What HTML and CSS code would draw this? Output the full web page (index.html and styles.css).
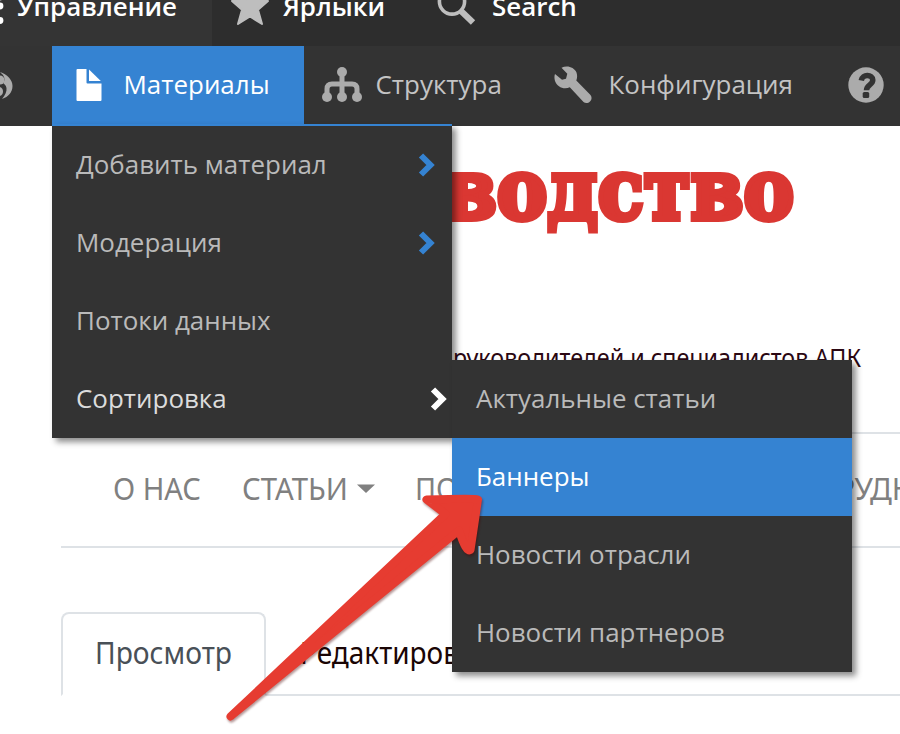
FILE: index.html
```html
<!DOCTYPE html>
<html lang="ru">
<head>
<meta charset="utf-8">
<title>Материалы</title>
<link rel="stylesheet" href="styles.css">
</head>
<body>
<header class="toolbar">
  <div class="bar">
    <a class="tab tab-manage"><svg class="i-burger" width="6" height="44" viewBox="0 0 6 44"><g fill="#fff"><circle cx="0" cy="12" r="3.4"/><circle cx="0" cy="21" r="3.4"/><circle cx="0" cy="35.500" r="3.400"/></g></svg><span>Управление</span></a>
    <a class="tab tab-short"><svg width="40" height="40" viewBox="0 0 40 40"><path fill="#bebebe" stroke="#bebebe" stroke-width="2" stroke-linejoin="round" d="M20 2l5.300 12h12.700l-10 8.800 4 14.200-12-7.500-12 7.500 4-14.200-10-8.800h12.700z"/></svg><span>Ярлыки</span></a>
    <a class="tab tab-search"><svg width="40" height="40" viewBox="0 0 40 40"><circle cx="16" cy="14.500" r="12.600" fill="none" stroke="#bebebe" stroke-width="3.600"/><path d="M25 24l12 11.500" stroke="#bebebe" stroke-width="6.200"/></svg><span>Search</span></a>
  </div>
  <nav class="tray">
    <a class="item drop"><svg width="14" height="38" viewBox="0 0 14 38"><g fill="#ababab"><path d="M0 5c7 2 12.500 8 12.500 14 0 6-4 11-10.500 13 3-4 5-7 4.500-11C6 18 4 17 3 16c2-2 2-5 0-8z"/><circle cx="0" cy="13" r="4.500"/><path d="M0 20c4 1 4 8 0 9z"/></g></svg></a>
    <a class="item content"><svg width="26" height="34" viewBox="0 0 26 34"><path fill="#fff" d="M1.500 0h9v13.500q0 1 1 1h14v16.500q0 1-1 1h-23q-1 0-1-1V1q0-1 1-1z"/><path fill="#fff" d="M13 .5L24.800 12H13z"/></svg><span>Материалы</span></a>
    <a class="item structure"><svg width="40" height="36" viewBox="0 0 40 36"><g fill="#ababab"><circle cx="20" cy="5" r="5"/><circle cx="5" cy="30" r="5"/><circle cx="20" cy="30" r="5"/><circle cx="35" cy="30" r="5"/></g><path d="M20 5v25M5 29v-7q0-5 5-5h20q5 0 5 5v7" fill="none" stroke="#ababab" stroke-width="5"/></svg><span>Структура</span></a>
    <a class="item config"><svg width="38" height="38" viewBox="0 0 38 38"><path fill="#ababab" d="M7.500 1.800C13-1 20 1 22.500 6.500c1 3 .7 6-.2 8L36.500 29c3.500 4.500-2.500 10.500-7 7L15.800 21.300C10 24 3 21 1 15c-.8-3-.7-5 0-7l7 5.700 4-1 1.300-5z"/></svg><span>Конфигурация</span></a>
    <a class="item help"><svg width="36" height="36" viewBox="0 0 36 36"><circle cx="18" cy="18" r="17.700" fill="#ababab"/><path d="M13.300 13.500c1-7 11.500-6 11.500-.5 0 5-6.300 4.800-6.300 10.300" fill="none" stroke="#333" stroke-width="5.500"/><rect x="14.700" y="25" width="6.500" height="6" rx="1.600" fill="#333"/></svg></a>
  </nav>
</header>

<main class="page">
  <section class="brand">
    <svg class="logo" width="360" height="80"><text x="0" y="57.500" textLength="350" lengthAdjust="spacingAndGlyphs">водство</text></svg>
    <svg class="tagline" width="420" height="36"><text x="0" y="27" textLength="408" lengthAdjust="spacingAndGlyphs">руководителей и специалистов АПК</text></svg>
  </section>
  <nav class="site-nav">
    <svg class="n1" width="90" height="40"><text x="0" y="30" textLength="88" lengthAdjust="spacingAndGlyphs">О НАС</text></svg>
    <svg class="n2" width="134" height="40"><text x="0" y="30" textLength="106" lengthAdjust="spacingAndGlyphs">СТАТЬИ</text><path d="M115 14.500h18l-9 8.500z" fill="#808080"/></svg>
    <svg class="n3" width="44" height="40"><text x="1" y="30" textLength="43" lengthAdjust="spacingAndGlyphs">ПО</text></svg>
    <svg class="n4" width="80" height="40"><text x="2" y="30" textLength="77" lengthAdjust="spacingAndGlyphs">РУДН</text></svg>
  </nav>
  <div class="tabs">
    <a class="view"><svg width="140" height="40"><text x="1" y="30" textLength="137" lengthAdjust="spacingAndGlyphs">Просмотр</text></svg></a>
    <a class="edit"><svg width="165" height="40"><text x="1" y="30" textLength="159" lengthAdjust="spacingAndGlyphs">Редактиров</text></svg></a>
  </div>
</main>

<ul class="menu menu-main">
  <li><span>Добавить материал</span><svg class="chev" width="18" height="26" viewBox="0 0 18 26"><path d="M3 3.500l9.500 9.500-9.500 9.500"/></svg></li>
  <li><span>Модерация</span><svg class="chev" width="18" height="26" viewBox="0 0 18 26"><path d="M3 3.500l9.500 9.500-9.500 9.500"/></svg></li>
  <li><span>Потоки данных</span></li>
  <li class="open"><span>Сортировка</span><svg class="chev" width="18" height="26" viewBox="0 0 18 26"><path d="M3 3.500l9.500 9.500-9.500 9.500"/></svg></li>
</ul>
<ul class="menu menu-sub">
  <li><span>Актуальные статьи</span></li>
  <li class="active"><span>Баннеры</span></li>
  <li><span>Новости отрасли</span></li>
  <li><span>Новости партнеров</span></li>
</ul>

<svg class="arrow" width="280" height="250" viewBox="220 480 280 250"><path fill="#e63c31" stroke="#e63c31" stroke-width="8" stroke-linejoin="round" d="M230.500 716.500L445.500 514 426.500 499.500Q477 498 478 499.500L470.500 550Q466 553 459 530.500Z"/></svg>
</body>
</html>
```
FILE: styles.css
```css
* { box-sizing: border-box; }
body {
  margin: 0;
  width: 900px;
  height: 734px;
  overflow: hidden;
  position: relative;
  background: #fff;
  font-family: "Open Sans", "Noto Sans", sans-serif;
  font-size: 25.950px;
}
svg { display: block; flex: none; }
.bar {
  display: flex;
  height: 78px;
  margin-top: -32px;
  background: #2d2d2d;
  color: #fff;
  font-weight: 600;
}
.toolbar { display: flow-root; overflow: hidden; }
.tab { display: flex; align-items: center; white-space: nowrap; }
.tab span, .menu span { padding-bottom: 2px; }
.tab-manage { width: 212px; background: #343434; gap: 11px; }
.tab-short { width: 206px; padding-left: 18px; gap: 13px; }
.tab-search { padding-left: 18px; gap: 16px; }
.tray {
  display: flex;
  height: 80px;
  background: #333;
  color: #c4c4c4;
}
.item { display: flex; align-items: center; white-space: nowrap; }
.item span { padding-bottom: 4px; }
.drop { width: 52px; }
.content {
  width: 252px;
  padding-left: 24px;
  gap: 21.500px;
  background: #3583d2;
  color: #fff;
}
.structure { width: 232px; padding-left: 18px; gap: 13.500px; }
.config { width: 312px; padding-left: 18px; gap: 16.500px; }
.help svg, .structure svg { margin-top: -2px; }
.config svg { margin-top: -3px; }

.page { font-family: "Noto Sans", sans-serif; }
.brand {
  height: 308px;
  margin-left: 61px;
  padding: 35px 0 0 383px;
  border-bottom: 2px solid #dee2e6;
}
.logo text {
  font: bold 84px "DejaVu Serif", serif;
  fill: #da3732;
  stroke: #da3732;
  stroke-width: 6px;
}
.tagline { margin: 99px 0 0 9px; }
.tagline text { font-size: 24.500px; fill: #2b0712; }
.site-nav {
  display: flex;
  height: 114px;
  margin-left: 61px;
  padding: 36px 0 0 52px;
  border-bottom: 2px solid #dee2e6;
  font-size: 31px;
  fill: #808080;
}
.n2 { margin-left: 39px; }
.n3 { margin-left: 38px; }
.n4 { margin-left: 377px; }
.tabs {
  display: flex;
  height: 84px;
  margin: 64px 0 0 61px;
  font-size: 31px;
  border-bottom: 2px solid #dee2e6;
}
.tabs a { display: block; padding-top: 22px; }
.tabs .view {
  width: 205px;
  height: 84px;
  padding-left: 31px;
  border: 2px solid #dee2e6;
  border-bottom-color: #fff;
  border-radius: 8px 8px 0 0;
  background: #fff;
  fill: #495057;
  padding-top: 20px;
}
.edit { padding-left: 33px; fill: #1a0505; }

.menu {
  position: absolute;
  width: 400px;
  margin: 0;
  padding: 0;
  list-style: none;
  background: #333;
  color: #bababa;
  box-shadow: 4px 4px 6px rgba(0, 0, 0, .45);
}
.menu li {
  display: flex;
  align-items: center;
  justify-content: space-between;
  height: 78px;
  padding: 0 16px 0 24px;
  white-space: nowrap;
}
.menu-main { left: 52px; top: 124px; border-top: 2px solid #3583d2; }
.menu-sub { left: 452px; top: 360px; }
.menu .open { color: #dcdcdc; padding-right: 4px; }
.menu .active { background: #3583d2; color: #fff; }
.chev path { fill: none; stroke: #3583d2; stroke-width: 6px; }
.open .chev path { stroke: #fff; }
.arrow {
  position: absolute;
  left: 220px;
  top: 480px;
  filter: drop-shadow(1px 2px 1px rgba(70, 0, 0, .4));
}
```
